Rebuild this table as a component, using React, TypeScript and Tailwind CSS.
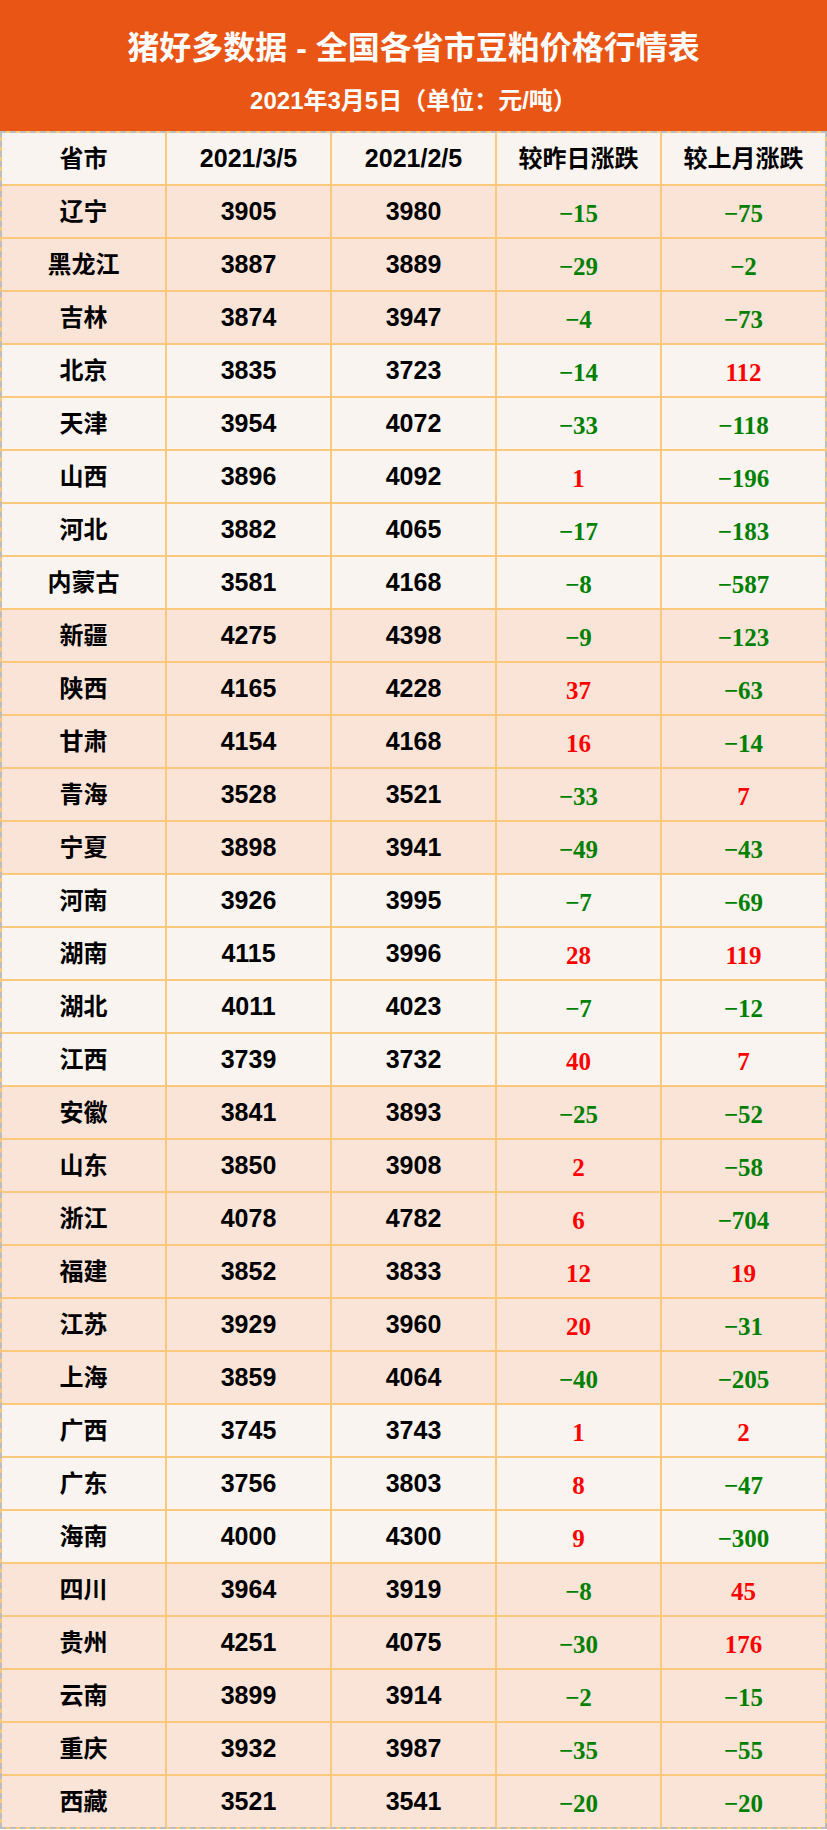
import React from "react";

type Row = [string, number, number, number, number, boolean];

const rows: Row[] = [
  ["辽宁", 3905, 3980, -15, -75, true],
  ["黑龙江", 3887, 3889, -29, -2, true],
  ["吉林", 3874, 3947, -4, -73, true],
  ["北京", 3835, 3723, -14, 112, false],
  ["天津", 3954, 4072, -33, -118, false],
  ["山西", 3896, 4092, 1, -196, false],
  ["河北", 3882, 4065, -17, -183, false],
  ["内蒙古", 3581, 4168, -8, -587, false],
  ["新疆", 4275, 4398, -9, -123, true],
  ["陕西", 4165, 4228, 37, -63, true],
  ["甘肃", 4154, 4168, 16, -14, true],
  ["青海", 3528, 3521, -33, 7, true],
  ["宁夏", 3898, 3941, -49, -43, true],
  ["河南", 3926, 3995, -7, -69, false],
  ["湖南", 4115, 3996, 28, 119, false],
  ["湖北", 4011, 4023, -7, -12, false],
  ["江西", 3739, 3732, 40, 7, false],
  ["安徽", 3841, 3893, -25, -52, true],
  ["山东", 3850, 3908, 2, -58, true],
  ["浙江", 4078, 4782, 6, -704, true],
  ["福建", 3852, 3833, 12, 19, true],
  ["江苏", 3929, 3960, 20, -31, true],
  ["上海", 3859, 4064, -40, -205, true],
  ["广西", 3745, 3743, 1, 2, false],
  ["广东", 3756, 3803, 8, -47, false],
  ["海南", 4000, 4300, 9, -300, false],
  ["四川", 3964, 3919, -8, 45, true],
  ["贵州", 4251, 4075, -30, 176, true],
  ["云南", 3899, 3914, -2, -15, true],
  ["重庆", 3932, 3987, -35, -55, true],
  ["西藏", 3521, 3541, -20, -20, true],
];

const sans = "font-['Liberation_Sans','Noto_Sans_CJK_SC',sans-serif]";

function Cell({
  children,
  peach,
  kind,
  num,
}: {
  children: React.ReactNode;
  peach: boolean;
  kind?: "up" | "down";
  num?: boolean;
}) {
  const bg = peach ? "bg-[#fae4d8]" : "bg-[#f9f4ef]";
  if (kind) {
    const color = kind === "up" ? "text-[#ff0000]" : "text-[#008000]";
    return (
      <div
        className={`${bg} h-[51px] flex items-center justify-center pt-[4px] font-['Liberation_Serif',serif] font-bold text-[25px] ${color}`}
      >
        {children}
      </div>
    );
  }
  return (
    <div
      className={`${bg} h-[51px] flex items-center justify-center ${sans} font-bold ${num ? "text-[25px]" : "text-[24px]"} text-black`}
    >
      {children}
    </div>
  );
}

function fmt(n: number) {
  return n < 0 ? "\u2212" + Math.abs(n) : String(n);
}

export default function App() {
  return (
    <div className="w-[827px] h-[1830px] bg-white">
      <div className={`h-[131px] bg-[#e95514] flex flex-col items-center text-white ${sans} font-bold`}>
        <div className="mt-[28px] text-[32px] leading-[40px]">猪好多数据 - 全国各省市豆粕价格行情表</div>
        <div className="mt-[18px] text-[24px] leading-[30px]">2021年3月5日（单位：元/吨）</div>
      </div>
      <div className="grid grid-cols-5 gap-[2px] bg-[#fcc97c] border-2 border-dashed border-[#bdbdbd]">
        <Cell peach={false}>省市</Cell>
        <Cell peach={false} num>2021/3/5</Cell>
        <Cell peach={false} num>2021/2/5</Cell>
        <Cell peach={false}>较昨日涨跌</Cell>
        <Cell peach={false}>较上月涨跌</Cell>
        {rows.map(([name, a, b, d, m, peach]) => (
          <React.Fragment key={name}>
            <Cell peach={peach}>{name}</Cell>
            <Cell peach={peach} num>{a}</Cell>
            <Cell peach={peach} num>{b}</Cell>
            <Cell peach={peach} kind={d > 0 ? "up" : "down"}>{fmt(d)}</Cell>
            <Cell peach={peach} kind={m > 0 ? "up" : "down"}>{fmt(m)}</Cell>
          </React.Fragment>
        ))}
      </div>
    </div>
  );
}
